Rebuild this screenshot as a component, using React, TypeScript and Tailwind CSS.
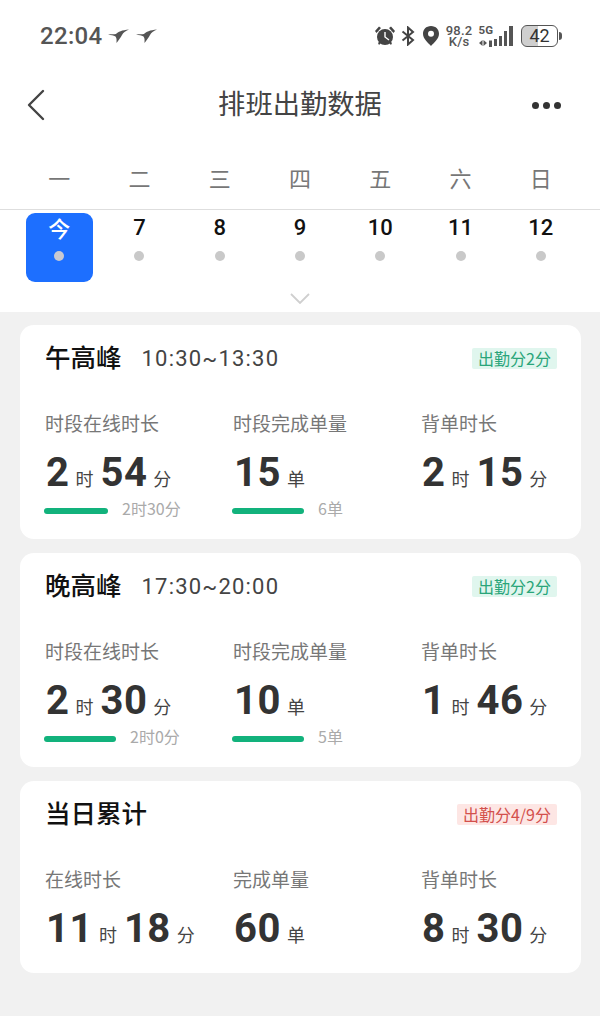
import React from "react";

const weekdays = ["一", "二", "三", "四", "五", "六", "日"];
const dates = ["7", "8", "9", "10", "11", "12"];

const Bird = () => (
  <svg width="21" height="15" viewBox="0 0 21 15" fill="#555">
    <path d="M0 5.5 C3 5 6 5.5 8 5 C10 3 14 1 21 0.5 C17 2 15.5 3.5 14 6 C12.5 8.5 11 11 8.5 14 C8.5 11 9 9.5 7.5 7.5 C5.5 6.5 3 6 0 5.5 Z" />
  </svg>
);

const StatusIcons = () => (
  <div className="flex items-center">
    {/* alarm */}
    <svg width="22" height="22" viewBox="0 0 22 22" fill="#444">
      <circle cx="11" cy="12" r="8" />
      <path d="M1 6 L5 1.5 L7 3 L2.5 8 Z M21 6 L17 1.5 L15 3 L19.5 8 Z M4 18 L6 16 L7 18 L5 20 Z M18 18 L16 16 L15 18 L17 20 Z" />
      <path d="M11 7 V12 L15 15" stroke="#fff" strokeWidth="1.4" fill="none" />
    </svg>
    {/* bluetooth */}
    <svg width="14" height="20" viewBox="0 0 14 20" fill="none" stroke="#444" strokeWidth="2" className="ml-[5px]">
      <path d="M1.5 5.5 L12 14 L7 18.5 V1.5 L12 6 L1.5 14.5" />
    </svg>
    {/* location */}
    <svg width="18" height="22" viewBox="0 0 18 22" className="ml-[7px]">
      <path d="M9 1 C4 1 1 4.6 1 8.8 C1 13.5 5.5 17.5 9 21 C12.5 17.5 17 13.5 17 8.8 C17 4.6 14 1 9 1 Z" fill="#444" />
      <circle cx="9" cy="8.8" r="3" fill="#fff" />
    </svg>
    {/* net speed */}
    <div className="ml-[6px] w-[27px] whitespace-pre text-center text-[13px] leading-[11.5px] font-medium tracking-[0.2px] text-[#555] font-['Roboto',sans-serif]">
      {"98.2\nK/s"}
    </div>
    {/* signal */}
    <div className="ml-[6px] flex flex-col items-start">
      <span className="text-[11.5px] leading-[10px] font-bold text-[#555] font-['Roboto',sans-serif]">5G</span>
      <svg width="14" height="8" viewBox="0 0 14 8" fill="#555" className="mt-[4px]">
        <path d="M0 4 L3.5 1 V7 Z M8 4 L4.5 1 V7 Z" />
        <rect x="10" y="1.5" width="3" height="6.5" />
      </svg>
    </div>
    <svg width="19" height="20" viewBox="0 0 19 20" fill="#555" className="ml-[1px]">
      <rect x="0" y="13" width="3" height="7" />
      <rect x="5" y="10" width="3" height="10" />
      <rect x="10" y="5" width="3" height="15" />
      <rect x="15" y="0" width="4" height="20" />
    </svg>
    {/* battery */}
    <div className="ml-[8px] flex items-center">
      <div className="flex h-[22px] w-[37px] items-center justify-center rounded-[6px] border-[1.5px] border-[#555] bg-[linear-gradient(90deg,#cfcfcf_45%,#ffffff_45%)] text-[18px] leading-none text-[#333] font-['Roboto',sans-serif]">
        42
      </div>
      <div className="ml-[1px] h-[8px] w-[3px] rounded-r-sm bg-[#555]" />
    </div>
  </div>
);

type Stat = {
  label: string;
  values: [string, string][];
  bar?: number;
  target?: string;
};

type CardProps = {
  title: string;
  time?: string;
  badge: string;
  red?: boolean;
  stats: Stat[];
  className: string;
};

const StatColumn = ({ label, values, bar, target }: Stat) => (
  <div className="flex flex-col">
    <div className="text-[19px] leading-[26px] text-[#777]">{label}</div>
    <div className="mt-[15px] flex h-[44px] items-baseline font-['Roboto',sans-serif]">
      {values.map(([num, unit]) => (
        <React.Fragment key={unit}>
          <span className="text-[40px] leading-[44px] font-bold tracking-[0.5px] text-[#333] first:ml-[1px]">{num}</span>
          <span className="mr-[7px] ml-[6px] text-[18px] text-[#444] font-['Noto_Sans_CJK_SC',sans-serif]">{unit}</span>
        </React.Fragment>
      ))}
    </div>
    {bar !== undefined && (
      <div className="mt-[7px] flex h-[18px] items-center">
        <div className="ml-[-1px] h-[6px] rounded-full bg-[#12b27c]" style={{ width: bar }} />
        <span className="ml-[14px] pb-[7px] text-[16px] leading-none text-[#aaa]">{target}</span>
      </div>
    )}
  </div>
);

const Card = ({ title, time, badge, red, stats, className }: CardProps) => (
  <div className={`rounded-[14px] bg-white pl-[25px] pr-[24px] ${className}`}>
    <div className="flex h-[66px] items-center">
      <span className="pb-[4px] text-[25.5px] font-medium leading-none text-[#111]">{title}</span>
      {time && <span className="ml-[20px] pt-[2px] text-[22px] leading-none tracking-[1.2px] text-[#444] font-['Roboto',sans-serif]">{time}</span>}
      <span
        className={`ml-auto flex h-[21px] items-center rounded-[2px] px-[6px] text-[16px] leading-none ${
          red ? "bg-[#fde6e4] text-[#d3504c]" : "bg-[#e0f6ee] text-[#2aa57a]"
        }`}
      >
        {badge}
      </span>
    </div>
    <div className="mt-[19px] grid grid-cols-[188px_188px_1fr]">
      {stats.map((s) => (
        <StatColumn key={s.label} {...s} />
      ))}
    </div>
  </div>
);

export default function App() {
  return (
    <div className="flex h-[1016px] w-[600px] flex-col overflow-hidden bg-[#f1f1f1] font-['Noto_Sans_CJK_SC',sans-serif]">
      <div className="bg-white">
        {/* status bar */}
        <div className="flex h-[72px] items-center justify-between pl-[40px] pr-[38px]">
          <div className="flex items-center">
            <span className="text-[24px] leading-none font-medium tracking-[0.3px] text-[#555] font-['Roboto',sans-serif]">22:04</span>
            <span className="ml-[6px] flex gap-[7px]">
              <Bird />
              <Bird />
            </span>
          </div>
          <StatusIcons />
        </div>

        {/* header */}
        <div className="grid h-[66px] grid-cols-[1fr_auto_1fr] items-center pl-[26px] pr-[39px]">
          <svg width="20" height="32" viewBox="0 0 20 32" fill="none" stroke="#444" strokeWidth="2.4" strokeLinecap="round" strokeLinejoin="round">
            <path d="M17 2 L3 16 L17 30" />
          </svg>
          <h1 className="ml-[13px] pb-[4px] text-[27.3px] font-normal leading-none text-[#444]">排班出勤数据</h1>
          <div className="flex justify-end gap-[4px]">
            <span className="h-[7px] w-[7px] rounded-full bg-[#333]" />
            <span className="h-[7px] w-[7px] rounded-full bg-[#333]" />
            <span className="h-[7px] w-[7px] rounded-full bg-[#333]" />
          </div>
        </div>

        {/* weekdays */}
        <div className="grid h-[72px] grid-cols-7 items-center border-b border-[#dedede] px-[19px] pt-[6px]">
          {weekdays.map((d) => (
            <div key={d} className="text-center text-[22px] leading-none text-[#777]">
              {d}
            </div>
          ))}
        </div>

        {/* dates */}
        <div className="grid grid-cols-7 px-[19px] pt-[3px]">
          <div className="mx-auto flex h-[69px] w-[67px] flex-col items-center rounded-[9px] bg-[#1d6fff]">
            <span className="text-[22px] font-medium leading-[28px] text-white">今</span>
            <span className="mt-[10px] h-[10px] w-[10px] rounded-full bg-[#c9c9d1]" />
          </div>
          {dates.map((d) => (
            <div key={d} className="flex flex-col items-center pt-[1px]">
              <span className="text-[22px] font-medium leading-[28px] text-[#111] font-['Roboto',sans-serif]">{d}</span>
              <span className="mt-[9px] h-[10px] w-[10px] rounded-full bg-[#c9c9c9]" />
            </div>
          ))}
        </div>
        <div className="flex h-[30px] items-center justify-center pt-[2px]">
          <svg width="20" height="11" viewBox="0 0 20 11" fill="none" stroke="#cfcfcf" strokeWidth="1.8">
            <path d="M1 1 L10 10 L19 1" />
          </svg>
        </div>
      </div>

      {/* cards */}
      <div className="flex flex-col gap-[14px] pl-[20px] pr-[19px] pt-[13px]">
        <Card
          title="午高峰"
          time="10:30~13:30"
          badge="出勤分2分"
          className="h-[214px]"
          stats={[
            { label: "时段在线时长", values: [["2", "时"], ["54", "分"]], bar: 64, target: "2时30分" },
            { label: "时段完成单量", values: [["15", "单"]], bar: 72, target: "6单" },
            { label: "背单时长", values: [["2", "时"], ["15", "分"]] },
          ]}
        />
        <Card
          title="晚高峰"
          time="17:30~20:00"
          badge="出勤分2分"
          className="h-[214px]"
          stats={[
            { label: "时段在线时长", values: [["2", "时"], ["30", "分"]], bar: 72, target: "2时0分" },
            { label: "时段完成单量", values: [["10", "单"]], bar: 72, target: "5单" },
            { label: "背单时长", values: [["1", "时"], ["46", "分"]] },
          ]}
        />
        <Card
          title="当日累计"
          badge="出勤分4/9分"
          red
          className="h-[192px]"
          stats={[
            { label: "在线时长", values: [["11", "时"], ["18", "分"]] },
            { label: "完成单量", values: [["60", "单"]] },
            { label: "背单时长", values: [["8", "时"], ["30", "分"]] },
          ]}
        />
      </div>
    </div>
  );
}
